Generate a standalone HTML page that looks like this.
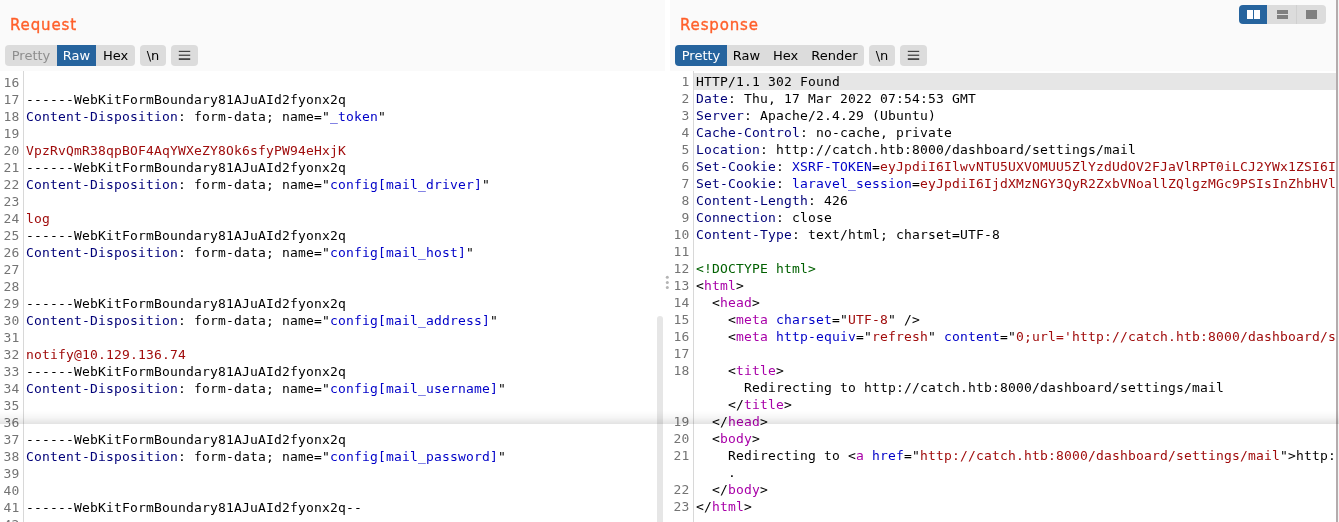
<!DOCTYPE html>
<html><head><meta charset="utf-8"><title>Burp Repeater</title>
<style>
*{box-sizing:border-box;margin:0;padding:0}
html,body{width:1339px;height:522px;overflow:hidden;background:#fafafa}
body{position:relative;font-family:"DejaVu Sans","Liberation Sans",sans-serif;font-size:13px;color:#000}
.abs{position:absolute}
.title{position:absolute;top:16px;height:18px;line-height:18px;font-weight:normal;font-size:15px;letter-spacing:0.85px;-webkit-text-stroke:0.35px #ff5f2a;color:#ff5f2a;white-space:nowrap}
.btn{position:absolute;top:45px;height:21px;line-height:21px;background:#dcdcdc;text-align:center;font-size:13px;white-space:nowrap;color:#000}
.btn.sel{background:#26649e;color:#fff}
.btn.dis{color:#8e8e8e}
.ed{position:absolute;top:71px;bottom:0;background:#fff;overflow:hidden}
.mono{font-family:"DejaVu Sans Mono","Liberation Mono",monospace;font-size:13px;letter-spacing:0.1733px;line-height:17px;white-space:pre}
.mono div{height:17px}
.nums,.code,.btn,.title{will-change:transform}
.nums{position:absolute;top:3px;text-align:right;color:#747474}
.code{position:absolute;top:3px}
.gl{position:absolute;top:0;bottom:0;width:1px;background:#d8d8d8}
.h{color:#000078}.k{color:#000}.b{color:#0000c8}.r{color:#a00c0c}.g{color:#006000}.m{color:#a800a8}
.hsvg{position:absolute;left:0;top:0}
</style></head><body>
<!-- LEFT -->
<div class="title" style="left:10px">Request</div>
<div class="btn dis" style="left:5px;width:52px;border-radius:4px 0 0 4px">Pretty</div>
<div class="btn sel" style="left:57px;width:39px">Raw</div>
<div class="btn" style="left:96px;width:39px;border-radius:0 4px 4px 0">Hex</div>
<div class="btn" style="left:140px;width:26px;border-radius:4px">\n</div>
<div class="btn" style="left:171px;width:27px;border-radius:4px"><svg class="hsvg" width="27" height="21" viewBox="0 0 27 21"><g stroke="#444" fill="none"><path d="M7.8 6.4h11.4" stroke-width="1.2"/><path d="M7.8 10.25h11.4" stroke-width="1.3"/><path d="M7.8 14.1h11.4" stroke-width="1.8"/></g></svg></div>
<div class="ed" style="left:0;width:665px">
  <div class="gl" style="left:23px"></div>
  <div class="nums mono" style="left:0;width:19.5px"><div>16</div><div>17</div><div>18</div><div>19</div><div>20</div><div>21</div><div>22</div><div>23</div><div>24</div><div>25</div><div>26</div><div>27</div><div>28</div><div>29</div><div>30</div><div>31</div><div>32</div><div>33</div><div>34</div><div>35</div><div>36</div><div>37</div><div>38</div><div>39</div><div>40</div><div>41</div><div>42</div></div>
  <div class="code mono" style="left:26px"><div></div><div><span class="k">------WebKitFormBoundary81AJuAId2fyonx2q</span></div><div><span class="h">Content-Disposition</span><span class="k">: form-data; name="</span><span class="b">_token</span><span class="k">"</span></div><div></div><div><span class="r">VpzRvQmR38qpBOF4AqYWXeZY8Ok6sfyPW94eHxjK</span></div><div><span class="k">------WebKitFormBoundary81AJuAId2fyonx2q</span></div><div><span class="h">Content-Disposition</span><span class="k">: form-data; name="</span><span class="b">config[mail_driver]</span><span class="k">"</span></div><div></div><div><span class="r">log</span></div><div><span class="k">------WebKitFormBoundary81AJuAId2fyonx2q</span></div><div><span class="h">Content-Disposition</span><span class="k">: form-data; name="</span><span class="b">config[mail_host]</span><span class="k">"</span></div><div></div><div></div><div><span class="k">------WebKitFormBoundary81AJuAId2fyonx2q</span></div><div><span class="h">Content-Disposition</span><span class="k">: form-data; name="</span><span class="b">config[mail_address]</span><span class="k">"</span></div><div></div><div><span class="r">notify@10.129.136.74</span></div><div><span class="k">------WebKitFormBoundary81AJuAId2fyonx2q</span></div><div><span class="h">Content-Disposition</span><span class="k">: form-data; name="</span><span class="b">config[mail_username]</span><span class="k">"</span></div><div></div><div></div><div><span class="k">------WebKitFormBoundary81AJuAId2fyonx2q</span></div><div><span class="h">Content-Disposition</span><span class="k">: form-data; name="</span><span class="b">config[mail_password]</span><span class="k">"</span></div><div></div><div></div><div><span class="k">------WebKitFormBoundary81AJuAId2fyonx2q--</span></div><div></div></div>
  <div class="abs" style="left:657px;top:245px;width:6px;bottom:-10px;background:#e6e6e6;border-radius:3px"></div>
</div>
<!-- divider -->
<div class="abs" style="left:665px;top:0;width:5px;height:522px;background:#fff"></div>
<svg class="abs" style="left:664px;top:272px" width="7" height="20" viewBox="0 0 7 20"><circle cx="3.3" cy="5.3" r="1.5" fill="#b4b4b4"/><circle cx="3.3" cy="10.4" r="1.5" fill="#b4b4b4"/><circle cx="3.3" cy="15.5" r="1.5" fill="#b4b4b4"/></svg>
<!-- RIGHT -->
<div class="title" style="left:680px">Response</div>
<div class="btn sel" style="left:675px;width:52px;border-radius:4px 0 0 4px">Pretty</div>
<div class="btn" style="left:727px;width:39px">Raw</div>
<div class="btn" style="left:766px;width:39px">Hex</div>
<div class="btn" style="left:805px;width:59px;border-radius:0 4px 4px 0">Render</div>
<div class="btn" style="left:869px;width:26px;border-radius:4px">\n</div>
<div class="btn" style="left:900px;width:27px;border-radius:4px"><svg class="hsvg" width="27" height="21" viewBox="0 0 27 21"><g stroke="#444" fill="none"><path d="M7.8 6.4h11.4" stroke-width="1.2"/><path d="M7.8 10.25h11.4" stroke-width="1.3"/><path d="M7.8 14.1h11.4" stroke-width="1.8"/></g></svg></div>
<!-- layout toggle -->
<div class="abs" style="left:1239px;top:5px;width:28px;height:19px;background:#26649e;border-radius:4px 0 0 4px"></div>
<div class="abs" style="left:1267px;top:5px;width:29px;height:19px;background:#dcdcdc"></div>
<div class="abs" style="left:1296px;top:5px;width:30px;height:19px;background:#dcdcdc;border-radius:0 4px 4px 0;border-left:1px solid #d0d0d0"></div>
<div class="abs" style="left:1247px;top:10px;width:6px;height:9px;background:#fff"></div>
<div class="abs" style="left:1254px;top:10px;width:6px;height:9px;background:#fff"></div>
<div class="abs" style="left:1277px;top:10px;width:11px;height:4px;background:#808080"></div>
<div class="abs" style="left:1277px;top:15px;width:11px;height:4px;background:#808080"></div>
<div class="abs" style="left:1306px;top:10px;width:11px;height:9px;background:#808080"></div>

<div class="ed" style="left:670px;width:666px">
  <div class="abs" style="left:24px;top:2px;right:0;height:17px;background:#e6e6e6"></div>
  <div class="gl" style="left:23px"></div>
  <div class="nums mono" style="left:0;top:2px;width:19.5px"><div>1</div><div>2</div><div>3</div><div>4</div><div>5</div><div>6</div><div>7</div><div>8</div><div>9</div><div>10</div><div>11</div><div>12</div><div>13</div><div>14</div><div>15</div><div>16</div><div>17</div><div>18</div><div></div><div></div><div>19</div><div>20</div><div>21</div><div></div><div>22</div><div>23</div></div>
  <div class="code mono" style="left:26px;top:2px"><div><span class="k">HTTP/1.1 302 Found</span></div><div><span class="h">Date</span><span class="k">: Thu, 17 Mar 2022 07:54:53 GMT</span></div><div><span class="h">Server</span><span class="k">: Apache/2.4.29 (Ubuntu)</span></div><div><span class="h">Cache-Control</span><span class="k">: no-cache, private</span></div><div><span class="h">Location</span><span class="k">: http://catch.htb:8000/dashboard/settings/mail</span></div><div><span class="h">Set-Cookie</span><span class="k">: </span><span class="b">XSRF-TOKEN</span><span class="k">=</span><span class="r">eyJpdiI6IlwvNTU5UXVOMUU5ZlYzdUdOV2FJaVlRPT0iLCJ2YWx1ZSI6IkhK</span></div><div><span class="h">Set-Cookie</span><span class="k">: </span><span class="b">laravel_session</span><span class="k">=</span><span class="r">eyJpdiI6IjdXMzNGY3QyR2ZxbVNoallZQlgzMGc9PSIsInZhbHVlIjoi</span></div><div><span class="h">Content-Length</span><span class="k">: 426</span></div><div><span class="h">Connection</span><span class="k">: close</span></div><div><span class="h">Content-Type</span><span class="k">: text/html; charset=UTF-8</span></div><div></div><div><span class="g">&lt;!DOCTYPE html&gt;</span></div><div><span class="k">&lt;</span><span class="m">html</span><span class="k">&gt;</span></div><div><span class="k">  &lt;</span><span class="m">head</span><span class="k">&gt;</span></div><div><span class="k">    &lt;</span><span class="m">meta</span><span class="k"> </span><span class="b">charset</span><span class="k">="</span><span class="r">UTF-8</span><span class="k">" /&gt;</span></div><div><span class="k">    &lt;</span><span class="m">meta</span><span class="k"> </span><span class="b">http-equiv</span><span class="k">="</span><span class="r">refresh</span><span class="k">" </span><span class="b">content</span><span class="k">="</span><span class="r">0;url='http://catch.htb:8000/dashboard/settings/mail'</span><span class="k">" /&gt;</span></div><div></div><div><span class="k">    &lt;</span><span class="m">title</span><span class="k">&gt;</span></div><div><span class="k">      Redirecting to http://catch.htb:8000/dashboard/settings/mail</span></div><div><span class="k">    &lt;/</span><span class="m">title</span><span class="k">&gt;</span></div><div><span class="k">  &lt;/</span><span class="m">head</span><span class="k">&gt;</span></div><div><span class="k">  &lt;</span><span class="m">body</span><span class="k">&gt;</span></div><div><span class="k">    Redirecting to &lt;</span><span class="m">a</span><span class="k"> </span><span class="b">href</span><span class="k">="</span><span class="r">http://catch.htb:8000/dashboard/settings/mail</span><span class="k">"&gt;http://catch.htb:8000/dashboard/settings/mail&lt;/</span><span class="m">a</span><span class="k">&gt;</span></div><div><span class="k">    .</span></div><div><span class="k">  &lt;/</span><span class="m">body</span><span class="k">&gt;</span></div><div><span class="k">&lt;/</span><span class="m">html</span><span class="k">&gt;</span></div></div>
</div>
<div class="abs" style="left:1336px;top:0;width:2px;height:522px;background:#b4acad"></div>
<div class="abs" style="left:1338px;top:0;width:1px;height:522px;background:#f4f4f4"></div>
<!-- shadow seam -->
<div class="abs" style="left:0;top:411px;width:1339px;height:13px;background:linear-gradient(to bottom,rgba(0,0,0,0),rgba(0,0,0,0.035) 50%,rgba(0,0,0,0.11))"></div>
</body></html>
